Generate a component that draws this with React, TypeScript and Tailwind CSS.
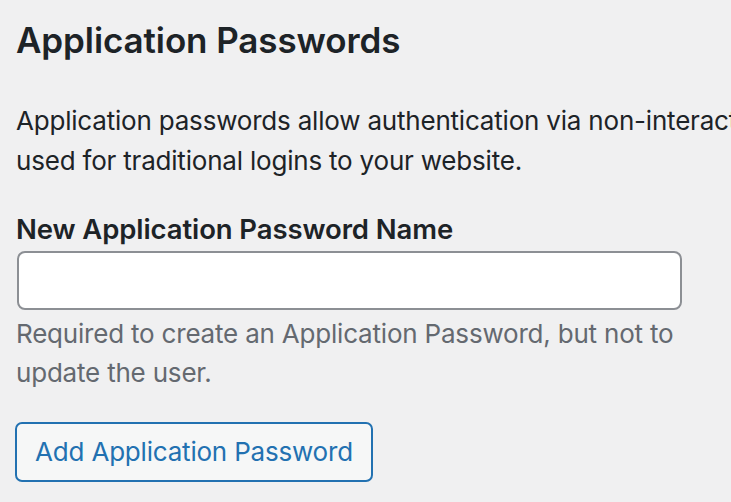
export default function App() {
  return (
    <div className="w-[731px] h-[502px] overflow-hidden bg-[#f0f0f1] text-[#1d2327] [font-family:Inter,'Liberation_Sans',sans-serif]">
      <div className="pl-4 pt-[18px]">
        <h2 className="text-[35px] leading-[44px] font-semibold whitespace-nowrap tracking-[-0.1px]">Application Passwords</h2>
        <p className="mt-[39px] text-[26px] leading-[40px] text-[#1d2327] whitespace-nowrap tracking-[-0.2px]">
          Application passwords allow authentication via non-interactive systems, such as XML-RPC or the REST API, without providing your actual password. Application passwords can be easily revoked. They cannot be
          <br />
          used for traditional logins to your website.
        </p>
        <label className="block mt-[30px] text-[27.5px] leading-[36px] font-semibold whitespace-nowrap tracking-[-0.1px]">New Application Password Name</label>
        <input
          type="text"
          className="block mt-[4px] ml-px w-[665px] h-[59px] bg-white border-2 border-[#8c8f94] rounded-[8px] outline-none"
        />
        <p className="mt-[4px] text-[26px] leading-[39px] text-[#646970] whitespace-nowrap tracking-[-0.2px]">
          Required to create an Application Password, but not to
          <br />
          update the user.
        </p>
        <button className="mt-[30px] -ml-px h-[60px] w-[358px] border-2 border-[#2271b1] rounded-[7px] bg-[#f6f7f7] text-[#2271b1] text-[26px] leading-[56px] whitespace-nowrap tracking-[-0.2px]">
          Add Application Password
        </button>
      </div>
    </div>
  );
}
